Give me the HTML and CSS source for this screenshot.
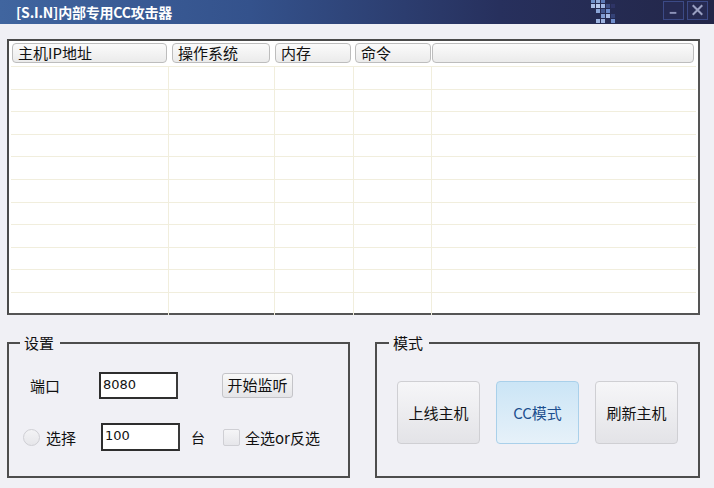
FILE: index.html
```html
<!DOCTYPE html>
<html>
<head>
<meta charset="utf-8">
<link rel="stylesheet" href="styles.css">
</head>
<body>
<div class="window">
  <div class="titlebar">
    <div class="title">[S.I.N]内部专用CC攻击器</div>
    <svg class="logo" width="34" height="24" viewBox="0 0 34 24">
      <rect x="2" y="0" width="4" height="3" fill="#6f8fc8"/>
      <rect x="7" y="0" width="4" height="3" fill="#8fa9d8"/>
      <rect x="12" y="0" width="4" height="3" fill="#5b78b5"/>
      <rect x="2" y="4" width="4" height="4" fill="#a9bde6"/>
      <rect x="7" y="4" width="4" height="4" fill="#b9cbee"/>
      <rect x="12" y="4" width="4" height="4" fill="#a0b6e2"/>
      <rect x="17" y="4" width="4" height="4" fill="#3e4f86"/>
      <rect x="22" y="4" width="4" height="4" fill="#2e3466"/>
      <rect x="7" y="9" width="4" height="4" fill="#8aa4d6"/>
      <rect x="12" y="9" width="4" height="4" fill="#43578f"/>
      <rect x="17" y="9" width="4" height="4" fill="#6a8acb"/>
      <rect x="12" y="14" width="4" height="4" fill="#7f9bd2"/>
      <rect x="17" y="14" width="4" height="4" fill="#a6bbe6"/>
      <rect x="22" y="14" width="4" height="4" fill="#354378"/>
      <rect x="7" y="19" width="4" height="4" fill="#9db3e0"/>
      <rect x="12" y="19" width="4" height="4" fill="#9db3e0"/>
      <rect x="22" y="19" width="4" height="4" fill="#6f8dcc"/>
    </svg>
    <div class="winbtns">
      <div class="winbtn"><svg width="20" height="19" viewBox="0 0 20 19"><rect x="6" y="11" width="7" height="2" fill="#8d93b8"/></svg></div>
      <div class="winbtn"><svg width="20" height="19" viewBox="0 0 20 19"><path d="M5 4 L15 14 M15 4 L5 14" stroke="#9aa0c2" stroke-width="2.2"/></svg></div>
    </div>
  </div>

  <div class="content">
    <div class="listview">
      <div class="header">
        <div class="hcell c1">主机IP地址</div>
        <div class="hcell c2">操作系统</div>
        <div class="hcell c3">内存</div>
        <div class="hcell c4">命令</div>
        <div class="hcell c5"></div>
      </div>
      <div class="rows">
        <div class="row"><span></span><span></span><span></span><span></span><span></span></div>
        <div class="row"><span></span><span></span><span></span><span></span><span></span></div>
        <div class="row"><span></span><span></span><span></span><span></span><span></span></div>
        <div class="row"><span></span><span></span><span></span><span></span><span></span></div>
        <div class="row"><span></span><span></span><span></span><span></span><span></span></div>
        <div class="row"><span></span><span></span><span></span><span></span><span></span></div>
        <div class="row"><span></span><span></span><span></span><span></span><span></span></div>
        <div class="row"><span></span><span></span><span></span><span></span><span></span></div>
        <div class="row"><span></span><span></span><span></span><span></span><span></span></div>
        <div class="row"><span></span><span></span><span></span><span></span><span></span></div>
        <div class="row last"><span></span><span></span><span></span><span></span><span></span></div>
      </div>
    </div>

    <div class="bottom">
      <fieldset class="group settings">
        <legend>设置</legend>
        <div class="line line1">
          <span class="lbl port">端口</span>
          <div class="input in-port">8080</div>
          <div class="btn listen">开始监听</div>
        </div>
        <div class="line line2">
          <span class="radio"></span>
          <span class="lbl pick">选择</span>
          <div class="input in-count">100</div>
          <span class="lbl unit">台</span>
          <span class="check"></span>
          <span class="lbl all">全选or反选</span>
        </div>
      </fieldset>
      <fieldset class="group mode">
        <legend>模式</legend>
        <div class="modebtns">
          <div class="mbtn">上线主机</div>
          <div class="mbtn active">CC模式</div>
          <div class="mbtn">刷新主机</div>
        </div>
      </fieldset>
    </div>
  </div>
</div>
</body>
</html>
```

FILE: styles.css
```css
* { box-sizing: border-box; }
html, body { margin: 0; padding: 0; }
body {
  width: 714px;
  height: 488px;
  background: #f0f0f5;
  font-family: "Noto Sans CJK SC", "DejaVu Sans", sans-serif;
  color: #111;
  overflow: hidden;
}
.window { width: 714px; height: 488px; display: flex; flex-direction: column; }

.titlebar {
  height: 24px;
  display: flex;
  align-items: center;
  background: linear-gradient(90deg, #40659f 0%, #34528c 35%, #27305d 70%, #232648 100%);
  flex: none;
}
.title {
  color: #fff;
  font-weight: bold;
  font-size: 14px;
  padding-left: 16px;
  letter-spacing: -0.2px;
  line-height: 24px;
}
.logo { margin-left: auto; margin-right: 40px; display: block; align-self: flex-start; }
.winbtns { display: flex; gap: 3px; margin-right: 6px; align-self: flex-start; padding-top: 1px; }
.winbtn {
  width: 21px; height: 19px;
  border: 1px solid #3c4a86;
  background: #262a52;
  display: flex; align-items: center; justify-content: center;
}
.winbtn svg { display: block; }

.content { padding: 15px 14px 0 7px; }

.listview {
  width: 693px;
  height: 276px;
  border: 2px solid #4a4a4a;
  border-right-color: #555;
  border-bottom-color: #555;
  background: #fff;
  padding: 1px 2px 0 2px;
  display: flex; flex-direction: column;
}
.header {
  display: grid;
  grid-template-columns: 160px 103px 80px 77px 1fr;
  height: 20px;
  padding: 0 2px 0 1px;
  margin-top: 1px;
}
.hcell {
  border: 1px solid #bdbdbd;
  border-radius: 4px;
  background: linear-gradient(#fbfbfb, #ebebeb);
  font-size: 15px;
  line-height: 18px;
  padding-left: 5px;
  white-space: nowrap;
  overflow: hidden;
}
.c1 { width: 155px; }
.c2 { width: 98px; }
.c3 { width: 76px; }
.c4 { width: 76px; }
.rows { margin-top: 3px; }
.row {
  display: grid;
  grid-template-columns: 158px 106px 79px 78px 1fr;
  height: 22.6px;
  border-top: 1px solid #f1eedd;
}
.row span { border-right: 1px solid #f1eedd; }
.row span:last-child { border-right: none; }

.bottom {
  display: flex;
  justify-content: space-between;
  margin-top: 20px;
}
.group {
  margin: 0;
  padding: 0;
  border: 2px solid #4d4d4d;
  height: 143px;
  min-width: 0;
}
.group legend {
  font-size: 15px;
  padding: 0 6px 0 4px;
  margin-left: 11px;
  line-height: 16px;
}
.settings { width: 343px; }
.mode { width: 325px; }
.mode legend { margin-left: 12px; }

.line { display: flex; align-items: center; }
.line1 { margin-top: 20px; height: 28px; }
.line2 { margin-top: 24px; height: 28px; }
.lbl { font-size: 15px; white-space: nowrap; }
.port { margin-left: 21px; }
.input {
  border: 2px solid #2e2e2e;
  border-right-color: #3a3a3a;
  background: #fff;
  font-family: "DejaVu Sans", sans-serif;
  font-size: 13px;
  height: 27px;
  line-height: 22px;
  padding-left: 2px;
}
.in-port { width: 79px; margin-left: 39px; }
.btn {
  margin-left: 44px;
  width: 71px; height: 25px;
  border: 1px solid #c4c4c8;
  border-radius: 3px;
  background: linear-gradient(#f8f8f8, #e5e5e8);
  font-size: 15px;
  line-height: 22px;
  text-align: center;
}
.radio {
  width: 17px; height: 17px;
  border-radius: 50%;
  border: 1px solid #cfcfd4;
  background: linear-gradient(#f3f3f5, #e6e6ea);
  margin-left: 14px;
}
.pick { margin-left: 6px; }
.in-count { width: 79px; margin-left: 25px; height: 28px; }
.unit { margin-left: 11px; font-size: 14px; }
.check {
  width: 17px; height: 17px;
  border: 1px solid #cfcfd4;
  border-radius: 2px;
  background: linear-gradient(#f5f5f7, #e6e6ea);
  margin-left: 18px;
}
.all { margin-left: 5px; }

.modebtns {
  display: flex;
  gap: 16px;
  margin-top: 30px;
  margin-left: 20px;
}
.mbtn {
  width: 83px; height: 63px;
  border: 1px solid #cfcfd3;
  border-radius: 4px;
  background: linear-gradient(#f6f6f8, #e3e3e7);
  font-size: 15px;
  display: flex; align-items: center; justify-content: center;
}
.mbtn.active {
  border-color: #a9d0ea;
  background: linear-gradient(#cbe5f6, #e6f1f9);
  color: #1d4f8f;
}
```
